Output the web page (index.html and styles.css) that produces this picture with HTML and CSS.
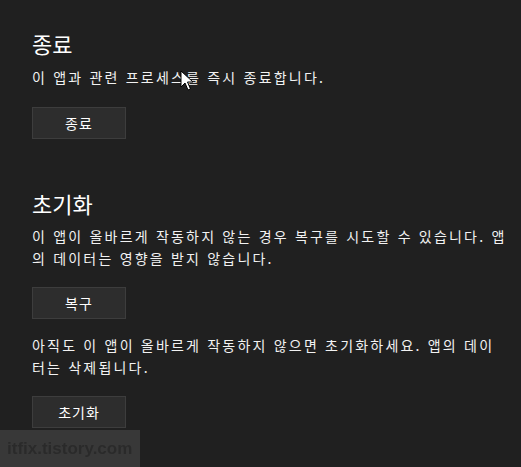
FILE: index.html
```html
<!DOCTYPE html>
<html lang="ko">
<head>
<meta charset="utf-8">
<meta name="color-scheme" content="dark">
<title>앱 설정</title>
<link rel="stylesheet" href="styles.css">
</head>
<body>
<main class="page">
  <section class="section section-first">
    <h2 class="title">종료</h2>
    <p class="desc">이 앱과 관련 프로세스를 즉시 종료합니다.</p>
    <button class="btn">종료</button>
  </section>
  <section class="section section-reset">
    <h2 class="title">초기화</h2>
    <p class="desc">이 앱이 올바르게 작동하지 않는 경우 복구를 시도할 수 있습니다. 앱<br>의 데이터는 영향을 받지 않습니다.</p>
    <button class="btn">복구</button>
    <p class="desc desc-second">아직도 이 앱이 올바르게 작동하지 않으면 초기화하세요. 앱의 데이<br>터는 삭제됩니다.</p>
    <button class="btn">초기화</button>
  </section>
</main>
<div class="watermark"><span class="watermark-text">itfix.tistory.com</span></div>
<svg class="cursor" width="14" height="22" viewBox="0 0 14 22">
  <path d="M1 1 L1 17 L5 13 L8 20 L10.5 19 L7.5 12 L13 12 Z" fill="#fff" stroke="#000" stroke-width="1"/>
</svg>
</body>
</html>
```

FILE: styles.css
```css
:root {
  color-scheme: dark;
}
html, body {
  margin: 0;
  padding: 0;
  background: #202020;
  height: 100%;
  overflow: hidden;
}
body {
  position: relative;
  font-family: "Noto Sans CJK KR", "Noto Sans", sans-serif;
  color: #ffffff;
}
.page {
  padding: 29px 0 0 32px;
}
.section {
  display: flex;
  flex-direction: column;
  align-items: flex-start;
}
.section-reset {
  margin-top: 50px;
}
.title {
  margin: 0;
  font-size: 22px;
  font-weight: 400;
  line-height: 28px;
}
.desc {
  margin: 9px 0 0;
  font-size: 14px;
  line-height: 22px;
  letter-spacing: 2.2px;
  white-space: nowrap;
  color: #f2f2f2;
}
.section-reset .desc {
  margin-top: 8px;
}
.section-reset .desc-second {
  margin-top: 15px;
}
.btn {
  margin-top: 19px;
  width: 94px;
  height: 32px;
  background: #2d2d2d;
  border: 1px solid #3d3d3d;
  color: #ffffff;
  font-family: "Noto Sans CJK KR", "Noto Sans", sans-serif;
  font-size: 14px;
  letter-spacing: 1px;
  padding: 0;
}
.section-reset .btn {
  margin-top: 18px;
}
.watermark {
  position: absolute;
  left: 0;
  top: 430px;
  width: 140px;
  height: 37px;
  background: #383838;
  padding-left: 7px;
  box-sizing: border-box;
  white-space: nowrap;
  overflow: hidden;
  display: flex;
  align-items: center;
}
.watermark-text {
  font-family: "Liberation Sans", Arial, sans-serif;
  font-weight: 700;
  font-size: 17px;
  line-height: 22px;
  color: #d4d4d4;
  filter: brightness(0.2);
}
.cursor {
  position: absolute;
  left: 180px;
  top: 70px;
}
```
